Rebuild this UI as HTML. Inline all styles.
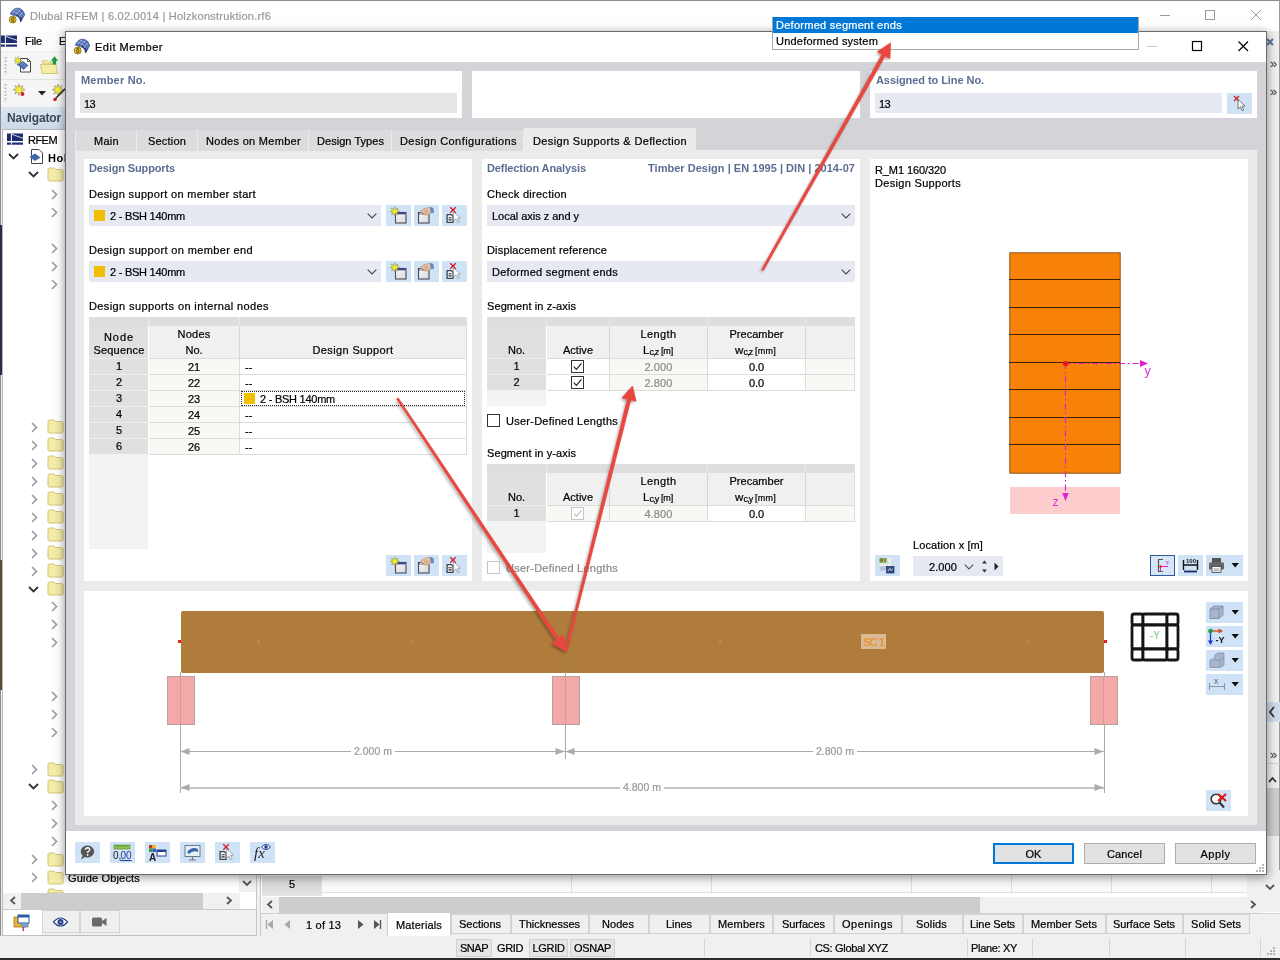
<!DOCTYPE html>
<html lang="en"><head><meta charset="utf-8"><title>Dlubal RFEM - Edit Member</title>
<style>
html,body{margin:0;padding:0;}
body{width:1280px;height:960px;overflow:hidden;position:relative;background:#fff;font-family:"Liberation Sans",sans-serif;font-size:12px;color:#000;}
.a{position:absolute;}
.t{opacity:0.999;-webkit-text-stroke:0.22px;position:absolute;height:16px;line-height:16px;white-space:nowrap;}
svg{overflow:visible;opacity:0.999;}
</style></head><body>
<div class="a" style="left:0px;top:0px;width:1280px;height:960px;background:#f0f0f0;"></div>
<div class="a" style="left:0px;top:0px;width:1280px;height:31px;background:#ffffff;"></div>
<div class="a" style="left:0px;top:0px;width:1280px;height:1px;background:#8d8d8d;"></div>
<svg class="a" style="left:9px;top:8px;" width="16" height="16" viewBox="0 0 16 16"><path d="M1.300 6 Q4.500 -0.300 9 0.200 Q14.300 0.800 15.600 6.800 L11.600 14 Q11 8.800 6.300 7.600 Q3.500 7 1.300 6 Z" fill="#4c6cb4" stroke="#2a3c74" stroke-width="0.700"/><path d="M11.600 14 Q11 8.800 6.300 7.600 L7.800 6.300 Q12.500 7.800 13 11.500 Z" fill="#2c3e78"/><path d="M3.400 3.200 Q8 3.600 13 9.400 M6 1 Q10.500 2 14.600 7.600 M3 6.600 Q5 1.800 9 0.400 M6.500 7.600 Q8.500 3 12 1.600 M9.800 9.500 Q11.500 5.500 14.300 4" fill="none" stroke="#b4c8ee" stroke-width="0.600"/><circle cx="3.700" cy="11.600" r="3.500" fill="#e6c437" stroke="#7a6410" stroke-width="0.800"/><text x="2" y="14" font-size="6.500" font-weight="bold" font-family="Liberation Sans, sans-serif" fill="#6a5208">6</text></svg>
<div class="t" style="left:30.00px;top:8px;font-size:11px;letter-spacing:0.251px;color:#999999;">Dlubal RFEM | 6.02.0014 | Holzkonstruktion.rf6</div>
<svg class="a" style="left:1159px;top:9px;" width="104" height="14" viewBox="0 0 104 14"><path d="M1 6.5 H11" stroke="#9a9a9a" stroke-width="1"/><rect x="46.500" y="1.500" width="9" height="9" fill="none" stroke="#9a9a9a"/><path d="M92 1 L102 11 M102 1 L92 11" stroke="#9a9a9a" stroke-width="1"/></svg>
<div class="a" style="left:0px;top:31px;width:1280px;height:21px;background:#fbfbfb;"></div>
<svg class="a" style="left:1px;top:35px;" width="16" height="12" viewBox="0 0 16 12"><rect x="0" y="0" width="16" height="12" fill="#fff"/><rect x="0" y="0.5" width="16" height="7.5" fill="#1d2c70"/><rect x="0" y="9.5" width="16" height="2.2" fill="#1d2c70"/><rect x="3.900" y="0.500" width="1" height="11.200" fill="#fff"/><path d="M4.500 1.200 L16 5.300" stroke="#fff" stroke-width="0.8"/></svg>
<div class="t" style="left:25.00px;top:33px;font-size:11px;letter-spacing:-0.181px;">File</div>
<div class="t" style="left:59.00px;top:33px;font-size:11px;letter-spacing:0.511px;">Edit</div>
<div class="a" style="left:0px;top:52px;width:1280px;height:54px;background:#f5f5f5;"></div>
<div class="a" style="left:0px;top:51px;width:1280px;height:1px;background:#ececec;"></div>
<div class="a" style="left:0px;top:79px;width:1280px;height:1px;background:#e2e2e2;"></div>
<svg class="a" style="left:4px;top:57px;" width="3" height="18" viewBox="0 0 3 18"><path d="M1.5 0 V18" stroke="#b8b8b8" stroke-width="2" stroke-dasharray="1.5 2"/></svg>
<svg class="a" style="left:4px;top:84px;" width="3" height="18" viewBox="0 0 3 18"><path d="M1.5 0 V18" stroke="#b8b8b8" stroke-width="2" stroke-dasharray="1.5 2"/></svg>
<svg class="a" style="left:14px;top:56px;" width="18" height="18" viewBox="0 0 18 18"><path d="M6.500 2.500 H13.500 L16.500 5.500 V16 H6.500 Z" fill="#fff" stroke="#444" stroke-width="1"/><path d="M13.500 2.500 V5.500 H16.500" fill="none" stroke="#444" stroke-width="0.800"/><path d="M2.500 8.500 L9 5 L14.500 9.500 L9.500 14 L7 11.500 Z" fill="#4a6cac"/><path d="M5.500 7 L11.500 11.500 M8 6 L12.500 10.500" stroke="#9ab4dc" stroke-width="0.600"/><path d="M4 0.500 L4.700 2.700 L6.800 1.600 L5.900 3.700 L8 4.500 L5.900 5.300 L6.800 7.400 L4.700 6.300 L4 8.500 L3.300 6.300 L1.200 7.400 L2.100 5.300 L0 4.500 L2.100 3.700 L1.200 1.600 L3.300 2.700 Z" fill="#f4ee2a" stroke="#8a8a6a" stroke-width="0.500"/></svg>
<svg class="a" style="left:40px;top:56px;" width="20" height="18" viewBox="0 0 20 18"><path d="M2 6 Q2 4.500 3.500 4.500 H7 L8.500 6 H14 V8 H3 Z" fill="#efe6a0" stroke="#cfc578" stroke-width="0.800"/><path d="M0.500 8.500 H16 L17.500 17.500 H2 Z" fill="#f3eba6" stroke="#cfc578" stroke-width="0.900"/><path d="M14.500 0.300 L18.200 4.800 H16.200 V8.500 H12.800 V4.800 H10.800 Z" fill="#1e9a48"/></svg>
<svg class="a" style="left:13px;top:84px;" width="14" height="16" viewBox="0 0 14 16"><path d="M6 0 L7 3.2 L10 1.6 L8.6 4.6 L12 5.6 L8.7 6.8 L10.2 10 L7 8.3 L6 11.6 L5 8.3 L1.8 10 L3.3 6.8 L0 5.6 L3.4 4.6 L2 1.6 L5 3.2 Z" fill="#f6ee3a" stroke="#8a8a6a" stroke-width="0.6"/><circle cx="9.5" cy="10" r="1.9" fill="#d81c2c"/></svg>
<svg class="a" style="left:38px;top:91px;" width="8" height="5" viewBox="0 0 8 5"><path d="M0 0 H8 L4 4.500 Z" fill="#222"/></svg>
<svg class="a" style="left:52px;top:84px;" width="16" height="18" viewBox="0 0 16 18"><path d="M6 0 L7 3.2 L10 1.6 L8.6 4.6 L12 5.6 L8.7 6.8 L10.2 10 L7 8.3 L6 11.6 L5 8.3 L1.8 10 L3.3 6.8 L0 5.6 L3.4 4.6 L2 1.6 L5 3.2 Z" fill="#f6ee3a" stroke="#8a8a6a" stroke-width="0.6"/><path d="M3 15 L14 4" stroke="#111" stroke-width="1.2"/><circle cx="3" cy="15.5" r="1.8" fill="#d81c2c"/></svg>
<div class="a" style="left:0px;top:107px;width:258px;height:22px;background:linear-gradient(#dde6f1,#cbd9e9);"></div>
<div class="t" style="left:7.00px;top:110px;font-size:12px;letter-spacing:-0.150px;color:#3d4654;font-weight:bold;-webkit-text-stroke:0;">Navigator</div>
<div class="a" style="left:2px;top:129px;width:255px;height:782px;background:#ffffff;border:1px solid #b9b9b9;box-sizing:border-box;"></div>
<svg class="a" style="left:7px;top:133px;" width="16" height="12" viewBox="0 0 16 12"><rect x="0" y="0" width="16" height="12" fill="#fff"/><rect x="0" y="0.5" width="16" height="7.5" fill="#1d2c70"/><rect x="0" y="9.5" width="16" height="2.2" fill="#1d2c70"/><rect x="3.900" y="0.500" width="1" height="11.200" fill="#fff"/><path d="M4.500 1.200 L16 5.300" stroke="#fff" stroke-width="0.8"/></svg>
<div class="t" style="left:28.00px;top:132px;font-size:11px;letter-spacing:-0.541px;">RFEM</div>
<svg class="a" style="left:8px;top:153px;" width="11" height="7" viewBox="0 0 11 7"><path d="M1 1 L5.5 5.5 L10 1" fill="none" stroke="#333" stroke-width="1.8"/></svg>
<svg class="a" style="left:29px;top:148px;" width="16" height="17" viewBox="0 0 16 17"><path d="M2.5 1.5 H10 L13.5 5 V15.5 H2.5 Z" fill="#fff" stroke="#444" stroke-width="1"/><path d="M0.5 9 L6 5.5 L11.5 9.5 L6 13 Z" fill="#3a68a8"/></svg>
<div class="t" style="left:48.00px;top:150px;font-size:11px;letter-spacing:0.573px;font-weight:bold;-webkit-text-stroke:0;">Holzkonstruktion</div>
<svg class="a" style="left:28px;top:171px;" width="11" height="7" viewBox="0 0 11 7"><path d="M1 1 L5.5 5.5 L10 1" fill="none" stroke="#333" stroke-width="1.8"/></svg>
<svg class="a" style="left:47px;top:167px;" width="17" height="15" viewBox="0 0 17 15"><path d="M1 2.5 Q1 1 2.5 1 L7 1 L8.5 2.5 L14.5 2.5 Q16 2.5 16 4 L16 12.5 Q16 14 14.5 14 L2.5 14 Q1 14 1 12.5 Z" fill="#f3eba6" stroke="#cfc578" stroke-width="1"/></svg>
<svg class="a" style="left:51px;top:189px;" width="7" height="11" viewBox="0 0 7 11"><path d="M1 1 L5.5 5.5 L1 10" fill="none" stroke="#9a9a9a" stroke-width="1.6"/></svg>
<svg class="a" style="left:51px;top:207px;" width="7" height="11" viewBox="0 0 7 11"><path d="M1 1 L5.5 5.5 L1 10" fill="none" stroke="#9a9a9a" stroke-width="1.6"/></svg>
<svg class="a" style="left:51px;top:243px;" width="7" height="11" viewBox="0 0 7 11"><path d="M1 1 L5.5 5.5 L1 10" fill="none" stroke="#9a9a9a" stroke-width="1.6"/></svg>
<svg class="a" style="left:51px;top:261px;" width="7" height="11" viewBox="0 0 7 11"><path d="M1 1 L5.5 5.5 L1 10" fill="none" stroke="#9a9a9a" stroke-width="1.6"/></svg>
<svg class="a" style="left:51px;top:279px;" width="7" height="11" viewBox="0 0 7 11"><path d="M1 1 L5.5 5.5 L1 10" fill="none" stroke="#9a9a9a" stroke-width="1.6"/></svg>
<svg class="a" style="left:31px;top:422px;" width="7" height="11" viewBox="0 0 7 11"><path d="M1 1 L5.5 5.5 L1 10" fill="none" stroke="#9a9a9a" stroke-width="1.6"/></svg>
<svg class="a" style="left:47px;top:419px;" width="17" height="15" viewBox="0 0 17 15"><path d="M1 2.5 Q1 1 2.5 1 L7 1 L8.5 2.5 L14.5 2.5 Q16 2.5 16 4 L16 12.5 Q16 14 14.5 14 L2.5 14 Q1 14 1 12.5 Z" fill="#f3eba6" stroke="#cfc578" stroke-width="1"/></svg>
<svg class="a" style="left:31px;top:440px;" width="7" height="11" viewBox="0 0 7 11"><path d="M1 1 L5.5 5.5 L1 10" fill="none" stroke="#9a9a9a" stroke-width="1.6"/></svg>
<svg class="a" style="left:47px;top:437px;" width="17" height="15" viewBox="0 0 17 15"><path d="M1 2.5 Q1 1 2.5 1 L7 1 L8.5 2.5 L14.5 2.5 Q16 2.5 16 4 L16 12.5 Q16 14 14.5 14 L2.5 14 Q1 14 1 12.5 Z" fill="#f3eba6" stroke="#cfc578" stroke-width="1"/></svg>
<svg class="a" style="left:31px;top:458px;" width="7" height="11" viewBox="0 0 7 11"><path d="M1 1 L5.5 5.5 L1 10" fill="none" stroke="#9a9a9a" stroke-width="1.6"/></svg>
<svg class="a" style="left:47px;top:455px;" width="17" height="15" viewBox="0 0 17 15"><path d="M1 2.5 Q1 1 2.5 1 L7 1 L8.5 2.5 L14.5 2.5 Q16 2.5 16 4 L16 12.5 Q16 14 14.5 14 L2.5 14 Q1 14 1 12.5 Z" fill="#f3eba6" stroke="#cfc578" stroke-width="1"/></svg>
<svg class="a" style="left:31px;top:476px;" width="7" height="11" viewBox="0 0 7 11"><path d="M1 1 L5.5 5.5 L1 10" fill="none" stroke="#9a9a9a" stroke-width="1.6"/></svg>
<svg class="a" style="left:47px;top:473px;" width="17" height="15" viewBox="0 0 17 15"><path d="M1 2.5 Q1 1 2.5 1 L7 1 L8.5 2.5 L14.5 2.5 Q16 2.5 16 4 L16 12.5 Q16 14 14.5 14 L2.5 14 Q1 14 1 12.5 Z" fill="#f3eba6" stroke="#cfc578" stroke-width="1"/></svg>
<svg class="a" style="left:31px;top:494px;" width="7" height="11" viewBox="0 0 7 11"><path d="M1 1 L5.5 5.5 L1 10" fill="none" stroke="#9a9a9a" stroke-width="1.6"/></svg>
<svg class="a" style="left:47px;top:491px;" width="17" height="15" viewBox="0 0 17 15"><path d="M1 2.5 Q1 1 2.5 1 L7 1 L8.5 2.5 L14.5 2.5 Q16 2.5 16 4 L16 12.5 Q16 14 14.5 14 L2.5 14 Q1 14 1 12.5 Z" fill="#f3eba6" stroke="#cfc578" stroke-width="1"/></svg>
<svg class="a" style="left:31px;top:512px;" width="7" height="11" viewBox="0 0 7 11"><path d="M1 1 L5.5 5.5 L1 10" fill="none" stroke="#9a9a9a" stroke-width="1.6"/></svg>
<svg class="a" style="left:47px;top:509px;" width="17" height="15" viewBox="0 0 17 15"><path d="M1 2.5 Q1 1 2.5 1 L7 1 L8.5 2.5 L14.5 2.5 Q16 2.5 16 4 L16 12.5 Q16 14 14.5 14 L2.5 14 Q1 14 1 12.5 Z" fill="#f3eba6" stroke="#cfc578" stroke-width="1"/></svg>
<svg class="a" style="left:31px;top:530px;" width="7" height="11" viewBox="0 0 7 11"><path d="M1 1 L5.5 5.5 L1 10" fill="none" stroke="#9a9a9a" stroke-width="1.6"/></svg>
<svg class="a" style="left:47px;top:527px;" width="17" height="15" viewBox="0 0 17 15"><path d="M1 2.5 Q1 1 2.5 1 L7 1 L8.5 2.5 L14.5 2.5 Q16 2.5 16 4 L16 12.5 Q16 14 14.5 14 L2.5 14 Q1 14 1 12.5 Z" fill="#f3eba6" stroke="#cfc578" stroke-width="1"/></svg>
<svg class="a" style="left:31px;top:548px;" width="7" height="11" viewBox="0 0 7 11"><path d="M1 1 L5.5 5.5 L1 10" fill="none" stroke="#9a9a9a" stroke-width="1.6"/></svg>
<svg class="a" style="left:47px;top:545px;" width="17" height="15" viewBox="0 0 17 15"><path d="M1 2.5 Q1 1 2.5 1 L7 1 L8.5 2.5 L14.5 2.5 Q16 2.5 16 4 L16 12.5 Q16 14 14.5 14 L2.5 14 Q1 14 1 12.5 Z" fill="#f3eba6" stroke="#cfc578" stroke-width="1"/></svg>
<svg class="a" style="left:31px;top:566px;" width="7" height="11" viewBox="0 0 7 11"><path d="M1 1 L5.5 5.5 L1 10" fill="none" stroke="#9a9a9a" stroke-width="1.6"/></svg>
<svg class="a" style="left:47px;top:563px;" width="17" height="15" viewBox="0 0 17 15"><path d="M1 2.5 Q1 1 2.5 1 L7 1 L8.5 2.5 L14.5 2.5 Q16 2.5 16 4 L16 12.5 Q16 14 14.5 14 L2.5 14 Q1 14 1 12.5 Z" fill="#f3eba6" stroke="#cfc578" stroke-width="1"/></svg>
<svg class="a" style="left:28px;top:586px;" width="11" height="7" viewBox="0 0 11 7"><path d="M1 1 L5.5 5.5 L10 1" fill="none" stroke="#333" stroke-width="1.8"/></svg>
<svg class="a" style="left:47px;top:581px;" width="17" height="15" viewBox="0 0 17 15"><path d="M1 2.5 Q1 1 2.5 1 L7 1 L8.5 2.5 L14.5 2.5 Q16 2.5 16 4 L16 12.5 Q16 14 14.5 14 L2.5 14 Q1 14 1 12.5 Z" fill="#f3eba6" stroke="#cfc578" stroke-width="1"/></svg>
<svg class="a" style="left:51px;top:601px;" width="7" height="11" viewBox="0 0 7 11"><path d="M1 1 L5.5 5.5 L1 10" fill="none" stroke="#9a9a9a" stroke-width="1.6"/></svg>
<svg class="a" style="left:51px;top:619px;" width="7" height="11" viewBox="0 0 7 11"><path d="M1 1 L5.5 5.5 L1 10" fill="none" stroke="#9a9a9a" stroke-width="1.6"/></svg>
<svg class="a" style="left:51px;top:637px;" width="7" height="11" viewBox="0 0 7 11"><path d="M1 1 L5.5 5.5 L1 10" fill="none" stroke="#9a9a9a" stroke-width="1.6"/></svg>
<svg class="a" style="left:51px;top:691px;" width="7" height="11" viewBox="0 0 7 11"><path d="M1 1 L5.5 5.5 L1 10" fill="none" stroke="#9a9a9a" stroke-width="1.6"/></svg>
<svg class="a" style="left:51px;top:709px;" width="7" height="11" viewBox="0 0 7 11"><path d="M1 1 L5.5 5.5 L1 10" fill="none" stroke="#9a9a9a" stroke-width="1.6"/></svg>
<svg class="a" style="left:51px;top:727px;" width="7" height="11" viewBox="0 0 7 11"><path d="M1 1 L5.5 5.5 L1 10" fill="none" stroke="#9a9a9a" stroke-width="1.6"/></svg>
<svg class="a" style="left:31px;top:764px;" width="7" height="11" viewBox="0 0 7 11"><path d="M1 1 L5.5 5.5 L1 10" fill="none" stroke="#9a9a9a" stroke-width="1.6"/></svg>
<svg class="a" style="left:47px;top:762px;" width="17" height="15" viewBox="0 0 17 15"><path d="M1 2.5 Q1 1 2.5 1 L7 1 L8.5 2.5 L14.5 2.5 Q16 2.5 16 4 L16 12.5 Q16 14 14.5 14 L2.5 14 Q1 14 1 12.5 Z" fill="#f3eba6" stroke="#cfc578" stroke-width="1"/></svg>
<svg class="a" style="left:28px;top:783px;" width="11" height="7" viewBox="0 0 11 7"><path d="M1 1 L5.5 5.5 L10 1" fill="none" stroke="#333" stroke-width="1.8"/></svg>
<svg class="a" style="left:47px;top:779px;" width="17" height="15" viewBox="0 0 17 15"><path d="M1 2.5 Q1 1 2.5 1 L7 1 L8.5 2.5 L14.5 2.5 Q16 2.5 16 4 L16 12.5 Q16 14 14.5 14 L2.5 14 Q1 14 1 12.5 Z" fill="#f3eba6" stroke="#cfc578" stroke-width="1"/></svg>
<svg class="a" style="left:51px;top:800px;" width="7" height="11" viewBox="0 0 7 11"><path d="M1 1 L5.5 5.5 L1 10" fill="none" stroke="#9a9a9a" stroke-width="1.6"/></svg>
<svg class="a" style="left:51px;top:818px;" width="7" height="11" viewBox="0 0 7 11"><path d="M1 1 L5.5 5.5 L1 10" fill="none" stroke="#9a9a9a" stroke-width="1.6"/></svg>
<svg class="a" style="left:51px;top:836px;" width="7" height="11" viewBox="0 0 7 11"><path d="M1 1 L5.5 5.5 L1 10" fill="none" stroke="#9a9a9a" stroke-width="1.6"/></svg>
<svg class="a" style="left:31px;top:854px;" width="7" height="11" viewBox="0 0 7 11"><path d="M1 1 L5.5 5.5 L1 10" fill="none" stroke="#9a9a9a" stroke-width="1.6"/></svg>
<svg class="a" style="left:47px;top:852px;" width="17" height="15" viewBox="0 0 17 15"><path d="M1 2.5 Q1 1 2.5 1 L7 1 L8.5 2.5 L14.5 2.5 Q16 2.5 16 4 L16 12.5 Q16 14 14.5 14 L2.5 14 Q1 14 1 12.5 Z" fill="#f3eba6" stroke="#cfc578" stroke-width="1"/></svg>
<svg class="a" style="left:31px;top:872px;" width="7" height="11" viewBox="0 0 7 11"><path d="M1 1 L5.5 5.5 L1 10" fill="none" stroke="#9a9a9a" stroke-width="1.6"/></svg>
<svg class="a" style="left:47px;top:870px;" width="17" height="15" viewBox="0 0 17 15"><path d="M1 2.5 Q1 1 2.5 1 L7 1 L8.5 2.5 L14.5 2.5 Q16 2.5 16 4 L16 12.5 Q16 14 14.5 14 L2.5 14 Q1 14 1 12.5 Z" fill="#f3eba6" stroke="#cfc578" stroke-width="1"/></svg>
<div class="t" style="left:68.00px;top:870px;font-size:11px;letter-spacing:0.177px;">Guide Objects</div>
<svg class="a" style="left:47px;top:888px;" width="17" height="5" viewBox="0 0 17 5"><path d="M1 5 V2.500 Q1 1 2.500 1 L7 1 L8.500 2.500 L14.500 2.500 Q16 2.500 16 4 V5 Z" fill="#f3eba6" stroke="#cfc578" stroke-width="1"/></svg>
<div class="a" style="left:239px;top:875px;width:17px;height:17px;background:#f0f0f0;"></div>
<svg class="a" style="left:242px;top:880px;" width="10" height="7" viewBox="0 0 10 7"><path d="M1 1 L5 5 L9 1" fill="none" stroke="#555" stroke-width="1.8"/></svg>
<div class="a" style="left:3px;top:893px;width:237px;height:16px;background:#f0f0f0;"></div>
<div class="a" style="left:21px;top:893px;width:182px;height:16px;background:#cdcdcd;"></div>
<svg class="a" style="left:9px;top:896px;" width="7" height="9" viewBox="0 0 7 9"><path d="M6 1 L2 4.5 L6 8" fill="none" stroke="#555" stroke-width="1.8"/></svg>
<svg class="a" style="left:226px;top:896px;" width="7" height="9" viewBox="0 0 7 9"><path d="M1 1 L5 4.5 L1 8" fill="none" stroke="#555" stroke-width="1.8"/></svg>
<div class="a" style="left:240px;top:893px;width:16px;height:16px;background:#ffffff;"></div>
<div class="a" style="left:2px;top:909px;width:255px;height:26px;background:#f0f0f0;"></div>
<div class="a" style="left:2px;top:909px;width:255px;height:1px;background:#c8c8c8;"></div>
<div class="a" style="left:3px;top:910px;width:39px;height:25px;background:#ffffff;"></div>
<div class="a" style="left:42px;top:910px;width:38px;height:23px;background:#efefef;border:1px solid #d4d4d4;box-sizing:border-box;"></div>
<div class="a" style="left:80px;top:910px;width:40px;height:23px;background:#efefef;border:1px solid #d4d4d4;box-sizing:border-box;"></div>
<div class="a" style="left:2px;top:935px;width:255px;height:1px;background:#c0c0c0;"></div>
<div class="a" style="left:256px;top:129px;width:1px;height:807px;background:#c8c8c8;"></div>
<div class="a" style="left:2px;top:129px;width:1px;height:807px;background:#b9b9b9;"></div>
<svg class="a" style="left:13px;top:914px;" width="18" height="18" viewBox="0 0 18 18"><path d="M1 3 H7 L8.5 5 H15 V13 H1 Z" fill="#f0b030" stroke="#a87010" stroke-width="0.8"/><rect x="5" y="1" width="11" height="8" fill="#fff" stroke="#2a5caa"/><rect x="5" y="1" width="11" height="2.5" fill="#2a5caa"/><path d="M7 10 L12 8 L16 12 L11 14 Z" fill="#6aa0e0"/><path d="M10 13 L10.5 17" stroke="#d02020" stroke-width="1.2"/></svg>
<svg class="a" style="left:53px;top:917px;" width="15" height="10" viewBox="0 0 15 10"><path d="M0.5 5 Q7.5 -3 14.5 5 Q7.5 13 0.5 5 Z" fill="#fff" stroke="#27408b" stroke-width="1.2"/><circle cx="7.5" cy="5" r="3" fill="#27408b"/><circle cx="7.5" cy="5" r="1.1" fill="#9ab"/></svg>
<svg class="a" style="left:92px;top:917px;" width="15" height="10" viewBox="0 0 15 10"><rect x="0" y="0.5" width="10" height="9" rx="1.5" fill="#6a6a6a"/><path d="M10 4 L14.5 1 V9 L10 6 Z" fill="#6a6a6a"/></svg>
<div class="a" style="left:0px;top:0px;width:1px;height:960px;background:#8a8a8a;"></div>
<div class="a" style="left:0px;top:225px;width:2px;height:150px;background:#2a2a4a;"></div>
<div class="a" style="left:0px;top:560px;width:2px;height:130px;background:#5a4a3a;"></div>
<div class="a" style="left:1267px;top:31px;width:13px;height:880px;background:#f0f0f0;"></div>
<div class="a" style="left:1279px;top:0px;width:1px;height:960px;background:#9a9a9a;"></div>
<svg class="a" style="left:1266px;top:38px;" width="8" height="8" viewBox="0 0 8 8"><path d="M1 1 L7 7 M7 1 L1 7" stroke="#5a7aa0" stroke-width="2"/></svg>
<div class="t" style="left:1270.00px;top:56px;font-size:13px;color:#555;">»</div>
<div class="t" style="left:1270.00px;top:84px;font-size:13px;color:#555;">»</div>
<div class="a" style="left:1267px;top:702px;width:13px;height:20px;background:#cddbea;"></div>
<svg class="a" style="left:1268px;top:706px;" width="8" height="12" viewBox="0 0 8 12"><path d="M6 1 L2 6 L6 11" fill="none" stroke="#333" stroke-width="1.8"/></svg>
<div class="t" style="left:1270.00px;top:747px;font-size:13px;color:#555;">»</div>
<div class="a" style="left:1267px;top:763px;width:13px;height:1px;background:#d0d0d0;"></div>
<div class="a" style="left:1267px;top:788px;width:12px;height:48px;background:#cdcdcd;"></div>
<svg class="a" style="left:1268px;top:776px;" width="9" height="7" viewBox="0 0 9 7"><path d="M1 6 L4.5 2 L8 6" fill="none" stroke="#333" stroke-width="1.8"/></svg>
<div class="a" style="left:261px;top:870px;width:1019px;height:66px;background:#ffffff;"></div>
<div class="a" style="left:260px;top:870px;width:1px;height:66px;background:#c8c8c8;"></div>
<div class="a" style="left:262px;top:876px;width:985px;height:17px;background:#fafaf8;"></div>
<div class="a" style="left:262px;top:876px;width:60px;height:16px;background:#dcdcdc;"></div>
<div class="a" style="left:262px;top:893px;width:60px;height:3px;background:#e4e4e4;"></div>
<div class="t" style="left:288.94px;top:876px;font-size:11px;">5</div>
<div class="a" style="left:262px;top:892px;width:985px;height:1px;background:#e0e0e0;"></div>
<div class="a" style="left:571px;top:875px;width:1px;height:18px;background:#e0e0e0;"></div>
<div class="a" style="left:711px;top:875px;width:1px;height:18px;background:#e0e0e0;"></div>
<div class="a" style="left:911px;top:875px;width:1px;height:18px;background:#e0e0e0;"></div>
<div class="a" style="left:1011px;top:875px;width:1px;height:18px;background:#e0e0e0;"></div>
<div class="a" style="left:1111px;top:875px;width:1px;height:18px;background:#e0e0e0;"></div>
<div class="a" style="left:1211px;top:875px;width:1px;height:18px;background:#e0e0e0;"></div>
<div class="a" style="left:1247px;top:870px;width:33px;height:42px;background:#f0f0f0;"></div>
<svg class="a" style="left:1265px;top:884px;" width="10" height="7" viewBox="0 0 10 7"><path d="M1 1 L5 5 L9 1" fill="none" stroke="#555" stroke-width="1.8"/></svg>
<div class="a" style="left:262px;top:897px;width:1000px;height:16px;background:#f0f0f0;"></div>
<div class="a" style="left:279px;top:897px;width:701px;height:16px;background:#cdcdcd;"></div>
<svg class="a" style="left:266px;top:900px;" width="7" height="9" viewBox="0 0 7 9"><path d="M6 1 L2 4.5 L6 8" fill="none" stroke="#555" stroke-width="1.8"/></svg>
<svg class="a" style="left:1250px;top:900px;" width="7" height="9" viewBox="0 0 7 9"><path d="M1 1 L5 4.5 L1 8" fill="none" stroke="#555" stroke-width="1.8"/></svg>
<div class="a" style="left:261px;top:913px;width:1019px;height:23px;background:#f0f0f0;"></div>
<div class="a" style="left:261px;top:913px;width:1019px;height:1px;background:#d0d0d0;"></div>
<svg class="a" style="left:266px;top:920px;" width="7" height="9" viewBox="0 0 7 9"><path d="M0.5 0 V9" stroke="#a8a8a8" stroke-width="1.4"/><path d="M7 0 V9 L1.5 4.5 Z" fill="#a8a8a8"/></svg>
<svg class="a" style="left:284px;top:920px;" width="6" height="9" viewBox="0 0 6 9"><path d="M6 0 V9 L0.5 4.5 Z" fill="#a8a8a8"/></svg>
<div class="t" style="left:306.00px;top:917px;font-size:11px;letter-spacing:0.195px;">1 of 13</div>
<svg class="a" style="left:358px;top:920px;" width="6" height="9" viewBox="0 0 6 9"><path d="M0 0 V9 L5.5 4.5 Z" fill="#555"/></svg>
<svg class="a" style="left:374px;top:920px;" width="7" height="9" viewBox="0 0 7 9"><path d="M6.5 0 V9" stroke="#555" stroke-width="1.4"/><path d="M0 0 V9 L5.5 4.5 Z" fill="#555"/></svg>
<div class="a" style="left:387px;top:913px;width:64px;height:23px;background:#ffffff;"></div>
<div class="a" style="left:387px;top:913px;width:1px;height:23px;background:#d0d0d0;"></div>
<div class="a" style="left:450px;top:913px;width:1px;height:23px;background:#d0d0d0;"></div>
<div class="t" style="left:396.00px;top:917px;font-size:11px;letter-spacing:0.153px;">Materials</div>
<div class="a" style="left:451px;top:914px;width:60px;height:20px;background:#efefef;border:1px solid #d2d2d2;box-sizing:border-box;"></div>
<div class="t" style="left:459.00px;top:916px;font-size:11px;letter-spacing:-0.024px;">Sections</div>
<div class="a" style="left:511px;top:914px;width:78px;height:20px;background:#efefef;border:1px solid #d2d2d2;box-sizing:border-box;"></div>
<div class="t" style="left:519.00px;top:916px;font-size:11px;letter-spacing:-0.012px;">Thicknesses</div>
<div class="a" style="left:589px;top:914px;width:60px;height:20px;background:#efefef;border:1px solid #d2d2d2;box-sizing:border-box;"></div>
<div class="t" style="left:602.00px;top:916px;font-size:11px;letter-spacing:0.041px;">Nodes</div>
<div class="a" style="left:649px;top:914px;width:61px;height:20px;background:#efefef;border:1px solid #d2d2d2;box-sizing:border-box;"></div>
<div class="t" style="left:666.00px;top:916px;font-size:11px;letter-spacing:-0.059px;">Lines</div>
<div class="a" style="left:710px;top:914px;width:63px;height:20px;background:#efefef;border:1px solid #d2d2d2;box-sizing:border-box;"></div>
<div class="t" style="left:718.00px;top:916px;font-size:11px;letter-spacing:0.166px;">Members</div>
<div class="a" style="left:773px;top:914px;width:61px;height:20px;background:#efefef;border:1px solid #d2d2d2;box-sizing:border-box;"></div>
<div class="t" style="left:782.00px;top:916px;font-size:11px;letter-spacing:-0.051px;">Surfaces</div>
<div class="a" style="left:834px;top:914px;width:68px;height:20px;background:#efefef;border:1px solid #d2d2d2;box-sizing:border-box;"></div>
<div class="t" style="left:842.00px;top:916px;font-size:11px;letter-spacing:0.489px;">Openings</div>
<div class="a" style="left:902px;top:914px;width:61px;height:20px;background:#efefef;border:1px solid #d2d2d2;box-sizing:border-box;"></div>
<div class="t" style="left:916.00px;top:916px;font-size:11px;letter-spacing:0.173px;">Solids</div>
<div class="a" style="left:963px;top:914px;width:60px;height:20px;background:#efefef;border:1px solid #d2d2d2;box-sizing:border-box;"></div>
<div class="t" style="left:970.00px;top:916px;font-size:11px;letter-spacing:-0.096px;">Line Sets</div>
<div class="a" style="left:1023px;top:914px;width:83px;height:20px;background:#efefef;border:1px solid #d2d2d2;box-sizing:border-box;"></div>
<div class="t" style="left:1031.00px;top:916px;font-size:11px;letter-spacing:0.054px;">Member Sets</div>
<div class="a" style="left:1106px;top:914px;width:77px;height:20px;background:#efefef;border:1px solid #d2d2d2;box-sizing:border-box;"></div>
<div class="t" style="left:1113.00px;top:916px;font-size:11px;letter-spacing:-0.081px;">Surface Sets</div>
<div class="a" style="left:1183px;top:914px;width:67px;height:20px;background:#efefef;border:1px solid #d2d2d2;box-sizing:border-box;"></div>
<div class="t" style="left:1191.00px;top:916px;font-size:11px;letter-spacing:0.047px;">Solid Sets</div>
<div class="a" style="left:0px;top:936px;width:1280px;height:22px;background:#f0f0f0;"></div>
<div class="a" style="left:456px;top:939px;width:36px;height:18px;background:#e6e6e6;border:1px solid #d0d0d0;box-sizing:border-box;"></div>
<div class="t" style="left:460.00px;top:940px;font-size:11px;letter-spacing:-0.489px;">SNAP</div>
<div class="t" style="left:497.00px;top:940px;font-size:11px;letter-spacing:-0.375px;">GRID</div>
<div class="a" style="left:529px;top:939px;width:39px;height:18px;background:#e6e6e6;border:1px solid #d0d0d0;box-sizing:border-box;"></div>
<div class="t" style="left:532.50px;top:940px;font-size:11px;letter-spacing:-0.323px;">LGRID</div>
<div class="a" style="left:570px;top:939px;width:45px;height:18px;background:#e6e6e6;border:1px solid #d0d0d0;box-sizing:border-box;"></div>
<div class="t" style="left:574.00px;top:940px;font-size:11px;letter-spacing:-0.303px;">OSNAP</div>
<div class="a" style="left:704px;top:938px;width:1px;height:19px;background:#d4d4d4;"></div>
<div class="a" style="left:810px;top:938px;width:1px;height:19px;background:#d4d4d4;"></div>
<div class="a" style="left:967px;top:938px;width:1px;height:19px;background:#d4d4d4;"></div>
<div class="a" style="left:1032px;top:938px;width:1px;height:19px;background:#d4d4d4;"></div>
<div class="a" style="left:1109px;top:938px;width:1px;height:19px;background:#d4d4d4;"></div>
<div class="a" style="left:1185px;top:938px;width:1px;height:19px;background:#d4d4d4;"></div>
<div class="a" style="left:1260px;top:938px;width:1px;height:19px;background:#d4d4d4;"></div>
<div class="t" style="left:815.00px;top:940px;font-size:11px;letter-spacing:-0.331px;">CS: Global XYZ</div>
<div class="t" style="left:971.00px;top:940px;font-size:11px;letter-spacing:-0.324px;">Plane: XY</div>
<svg class="a" style="left:1266px;top:946px;" width="10" height="10" viewBox="0 0 10 10"><g fill="#b0b0b0"><rect x="7" y="1" width="2" height="2"/><rect x="4" y="4" width="2" height="2"/><rect x="7" y="4" width="2" height="2"/><rect x="1" y="7" width="2" height="2"/><rect x="4" y="7" width="2" height="2"/><rect x="7" y="7" width="2" height="2"/></g></svg>
<div class="a" style="left:0px;top:958px;width:1280px;height:2px;background:#262c30;"></div>
<div class="a" style="left:65px;top:31px;width:1202px;height:844px;box-shadow:0 2px 9px 1px rgba(0,0,0,0.38);"></div>
<div class="a" style="left:65px;top:31px;width:1202px;height:844px;background:#d4d4d8;border:1px solid #6a6a6a;box-sizing:border-box;"></div>
<div class="a" style="left:66px;top:32px;width:1200px;height:30px;background:#ffffff;"></div>
<svg class="a" style="left:74px;top:39px;" width="16" height="16" viewBox="0 0 16 16"><path d="M1.300 6 Q4.500 -0.300 9 0.200 Q14.300 0.800 15.600 6.800 L11.600 14 Q11 8.800 6.300 7.600 Q3.500 7 1.300 6 Z" fill="#4c6cb4" stroke="#2a3c74" stroke-width="0.700"/><path d="M11.600 14 Q11 8.800 6.300 7.600 L7.800 6.300 Q12.500 7.800 13 11.500 Z" fill="#2c3e78"/><path d="M3.400 3.200 Q8 3.600 13 9.400 M6 1 Q10.500 2 14.600 7.600 M3 6.600 Q5 1.800 9 0.400 M6.500 7.600 Q8.500 3 12 1.600 M9.800 9.500 Q11.500 5.500 14.300 4" fill="none" stroke="#b4c8ee" stroke-width="0.600"/><circle cx="3.700" cy="11.600" r="3.500" fill="#e6c437" stroke="#7a6410" stroke-width="0.800"/><text x="2" y="14" font-size="6.500" font-weight="bold" font-family="Liberation Sans, sans-serif" fill="#6a5208">6</text></svg>
<div class="t" style="left:95.00px;top:39px;font-size:11px;letter-spacing:0.514px;">Edit Member</div>
<svg class="a" style="left:1146px;top:40px;" width="104" height="13" viewBox="0 0 104 13"><path d="M1 6.5 H11" stroke="#c8c8c8" stroke-width="1"/><rect x="46.500" y="1.500" width="9" height="9" fill="none" stroke="#000" stroke-width="1.200"/><path d="M92.500 1.500 L102 11 M102 1.500 L92.500 11" stroke="#000" stroke-width="1.2"/></svg>
<div class="a" style="left:66px;top:831px;width:1200px;height:43px;background:#ffffff;"></div>
<div class="a" style="left:75px;top:71px;width:387px;height:47px;background:#ffffff;"></div>
<div class="a" style="left:472px;top:71px;width:388px;height:47px;background:#ffffff;"></div>
<div class="a" style="left:870px;top:71px;width:387px;height:47px;background:#ffffff;"></div>
<div class="t" style="left:81.00px;top:72px;font-size:11px;letter-spacing:0.205px;color:#5b6d92;font-weight:bold;-webkit-text-stroke:0;">Member No.</div>
<div class="a" style="left:80px;top:93px;width:377px;height:20px;background:#e5e5e5;"></div>
<div class="t" style="left:84.00px;top:96px;font-size:11px;letter-spacing:-0.617px;">13</div>
<div class="t" style="left:876.00px;top:72px;font-size:11px;letter-spacing:-0.069px;color:#5b6d92;font-weight:bold;-webkit-text-stroke:0;">Assigned to Line No.</div>
<div class="a" style="left:875px;top:93px;width:347px;height:20px;background:#e6e8f2;"></div>
<div class="t" style="left:879.00px;top:96px;font-size:11px;letter-spacing:-0.617px;">13</div>
<div class="a" style="left:1227px;top:93px;width:25px;height:21px;background:#cfe2f6;"></div>
<svg class="a" style="left:1233px;top:95px;" width="14" height="17" viewBox="0 0 14 17"><path d="M1 1 L6 6 M6 1 L1 6" stroke="#d01818" stroke-width="1.2"/><path d="M5 4.5 L5 14 L7.3 11.8 L9 15.6 L10.6 14.9 L8.9 11.2 L12 11 Z" fill="#fff" stroke="#555" stroke-width="0.8"/></svg>
<div class="a" style="left:75px;top:150px;width:1182px;height:675px;background:#ebebeb;"></div>
<div class="a" style="left:75px;top:130px;width:449px;height:21px;background:#dcdcde;"></div>
<div class="a" style="left:136px;top:130px;width:1px;height:21px;background:#ececec;"></div>
<div class="t" style="left:94.00px;top:133px;font-size:11px;letter-spacing:0.290px;">Main</div>
<div class="a" style="left:197px;top:130px;width:1px;height:21px;background:#ececec;"></div>
<div class="t" style="left:148.00px;top:133px;font-size:11px;letter-spacing:0.187px;">Section</div>
<div class="a" style="left:308px;top:130px;width:1px;height:21px;background:#ececec;"></div>
<div class="t" style="left:206.00px;top:133px;font-size:11px;letter-spacing:0.301px;">Nodes on Member</div>
<div class="a" style="left:391px;top:130px;width:1px;height:21px;background:#ececec;"></div>
<div class="t" style="left:317.00px;top:133px;font-size:11px;letter-spacing:0.046px;">Design Types</div>
<div class="a" style="left:523px;top:130px;width:1px;height:21px;background:#ececec;"></div>
<div class="t" style="left:400.00px;top:133px;font-size:11px;letter-spacing:0.418px;">Design Configurations</div>
<div class="a" style="left:75px;top:130px;width:1px;height:21px;background:#ececec;"></div>
<div class="a" style="left:524px;top:128px;width:172px;height:23px;background:#ebebeb;"></div>
<div class="t" style="left:533.00px;top:133px;font-size:11px;letter-spacing:0.368px;">Design Supports &amp; Deflection</div>
<div class="a" style="left:84px;top:159px;width:388px;height:422px;background:#ffffff;"></div>
<div class="a" style="left:482px;top:159px;width:378px;height:422px;background:#ffffff;"></div>
<div class="a" style="left:870px;top:159px;width:378px;height:422px;background:#ffffff;"></div>
<div class="a" style="left:84px;top:591px;width:1164px;height:225px;background:#ffffff;"></div>
<div class="a" style="left:75px;top:842px;width:25px;height:21px;background:#cfe2f6;"></div>
<div class="a" style="left:110px;top:842px;width:25px;height:21px;background:#cfe2f6;"></div>
<div class="a" style="left:145px;top:842px;width:25px;height:21px;background:#cfe2f6;"></div>
<div class="a" style="left:180px;top:842px;width:25px;height:21px;background:#cfe2f6;"></div>
<div class="a" style="left:215px;top:842px;width:25px;height:21px;background:#cfe2f6;"></div>
<div class="a" style="left:250px;top:842px;width:25px;height:21px;background:#cfe2f6;"></div>
<svg class="a" style="left:79px;top:844px;" width="17" height="17" viewBox="0 0 17 17"><path d="M8.5 1.5 A6.5 6 0 1 1 6 13 L2 15.5 L3.6 11.6 A6.5 6 0 0 1 8.5 1.5 Z" fill="#555"/><path d="M6.4 5.8 Q6.6 3.8 8.7 3.8 Q10.8 3.9 10.7 5.7 Q10.6 6.8 9.3 7.5 Q8.6 7.9 8.6 9" fill="none" stroke="#fff" stroke-width="1.4"/><circle cx="8.6" cy="10.9" r="0.9" fill="#fff"/></svg>
<svg class="a" style="left:113px;top:845px;" width="19" height="16" viewBox="0 0 19 16"><rect x="1" y="0" width="16" height="4" fill="#8bc34a" stroke="#5a8a2a" stroke-width="0.6"/><path d="M4 0 V2 M7 0 V2 M10 0 V2 M13 0 V2" stroke="#3a6a1a" stroke-width="0.6"/><text x="0" y="14" font-size="10" font-family="Liberation Sans, sans-serif" fill="#222">0,</text><text x="7.5" y="14" font-size="10" font-family="Liberation Sans, sans-serif" fill="#223c9a" text-decoration="underline">00</text><path d="M7.5 15.5 H18" stroke="#223c9a" stroke-width="0.8"/></svg>
<svg class="a" style="left:148px;top:844px;" width="20" height="18" viewBox="0 0 20 18"><rect x="1" y="1" width="3.5" height="3.5" fill="#d03030"/><rect x="4.5" y="1" width="3.5" height="3.5" fill="#f0c020"/><rect x="1" y="4.5" width="3.5" height="3.5" fill="#30a040"/><rect x="4.5" y="4.5" width="3.5" height="3.5" fill="#3060c0"/><rect x="9" y="6" width="9" height="6" fill="#fff" stroke="#27408b" stroke-width="1"/><rect x="9" y="6" width="9" height="2" fill="#27408b"/><text x="1" y="17" font-size="10" font-weight="bold" font-family="Liberation Sans, sans-serif" fill="#222">A</text></svg>
<svg class="a" style="left:183px;top:844px;" width="20" height="18" viewBox="0 0 20 18"><rect x="2" y="1.5" width="15" height="11" fill="#e8eef6" stroke="#6a7a8a" stroke-width="1"/><path d="M4 8 Q9 2 15 5 L15 8 Q10 6 6 10 Z" fill="#3a68a8"/><path d="M9.5 12.5 V15.5 M6 16 H13" stroke="#6a7a8a" stroke-width="1.2"/></svg>
<svg class="a" style="left:219px;top:844px;" width="18" height="18" viewBox="0 0 18 18"><path d="M4.300 0.300 L9.700 5.700 M9.700 0.300 L4.300 5.700" stroke="#d81828" stroke-width="1.300"/><path d="M1.100 7.600 H5.300 L7.100 9.400 V15.300 H1.100 Z" fill="#fff" stroke="#3a3e48" stroke-width="1.300" stroke-linejoin="round"/><path d="M2.500 10.700 H5.700 M2.500 12.900 H5.700" stroke="#22252c" stroke-width="1.100"/><path d="M7.600 4.800 L7.600 14 L9.800 12 L11.600 15.600 L13.200 14.800 L11.500 11.300 L14.600 11 Z" fill="#fff" stroke="#8a90a0" stroke-width="0.800" stroke-linejoin="round"/></svg>
<svg class="a" style="left:253px;top:843px;" width="20" height="19" viewBox="0 0 20 19"><text x="1" y="15" font-size="15" font-style="italic" font-family="Liberation Serif, serif" fill="#222">fx</text><path d="M8.5 4 Q13 -1 17.5 4 Q13 9 8.5 4 Z" fill="#fff" stroke="#27408b" stroke-width="1"/><circle cx="13" cy="4" r="1.8" fill="#27408b"/></svg>
<div class="a" style="left:993px;top:843px;width:81px;height:21px;background:#e1e1e1;border:2px solid #0078d7;box-sizing:border-box;"></div>
<div class="a" style="left:1084px;top:843px;width:81px;height:21px;background:#e1e1e1;border:1px solid #adadad;box-sizing:border-box;"></div>
<div class="a" style="left:1175px;top:843px;width:81px;height:21px;background:#e1e1e1;border:1px solid #adadad;box-sizing:border-box;"></div>
<div class="t" style="left:1025.50px;top:846px;font-size:11px;letter-spacing:0.053px;">OK</div>
<div class="t" style="left:1107.00px;top:846px;font-size:11px;letter-spacing:0.127px;">Cancel</div>
<div class="t" style="left:1200.50px;top:846px;font-size:11px;letter-spacing:0.497px;">Apply</div>
<svg class="a" style="left:1255px;top:863px;" width="10" height="10" viewBox="0 0 10 10"><g fill="#b8b8b8"><rect x="7" y="1" width="2" height="2"/><rect x="4" y="4" width="2" height="2"/><rect x="7" y="4" width="2" height="2"/><rect x="1" y="7" width="2" height="2"/><rect x="4" y="7" width="2" height="2"/><rect x="7" y="7" width="2" height="2"/></g></svg>
<div class="t" style="left:89.00px;top:160px;font-size:11px;letter-spacing:-0.133px;color:#5b6d92;font-weight:bold;-webkit-text-stroke:0;">Design Supports</div>
<div class="t" style="left:89.00px;top:186px;font-size:11px;letter-spacing:0.329px;">Design support on member start</div>
<div class="t" style="left:89.00px;top:242px;font-size:11px;letter-spacing:0.354px;">Design support on member end</div>
<div class="a" style="left:89px;top:205px;width:292px;height:21px;background:#e6e8f2;"></div>
<div class="a" style="left:94px;top:210px;width:11px;height:11px;background:#f0c000;"></div>
<div class="t" style="left:110.00px;top:208px;font-size:11px;letter-spacing:-0.250px;">2 - BSH 140mm</div>
<svg class="a" style="left:367px;top:213px;" width="10" height="6" viewBox="0 0 10 6"><path d="M0.7 0.7 L5 5 L9.3 0.7" fill="none" stroke="#444" stroke-width="1.1"/></svg>
<div class="a" style="left:386px;top:205px;width:25px;height:21px;background:#cfe2f6;"></div>
<svg class="a" style="left:390px;top:207px;" width="18" height="17" viewBox="0 0 18 17"><defs><linearGradient id="wg" x1="0" y1="0" x2="1" y2="1"><stop offset="0" stop-color="#f6f6f8"/><stop offset="1" stop-color="#d8d8dc"/></linearGradient></defs><rect x="5.500" y="5.500" width="10.500" height="10.500" fill="url(#wg)" stroke="#464a58" stroke-width="1.100"/><rect x="6" y="5" width="9.500" height="2.300" fill="#3a4488"/><path d="M4.800 -0.300 L5.700 2.500 L8.200 1 L6.900 3.600 L9.600 4.400 L6.900 5.300 L8 7.900 L5.600 6.300 L4.800 9.100 L4 6.300 L1.600 7.900 L2.700 5.300 L0 4.400 L2.700 3.600 L1.400 1 L3.900 2.500 Z" fill="#f4f01e" stroke="#8a9060" stroke-width="0.600"/></svg>
<div class="a" style="left:414px;top:205px;width:25px;height:21px;background:#cfe2f6;"></div>
<svg class="a" style="left:418px;top:207px;" width="18" height="17" viewBox="0 0 18 17"><rect x="0.500" y="5.500" width="10.500" height="10.500" fill="url(#wg)" stroke="#464a58" stroke-width="1.100"/><rect x="1" y="5.200" width="9.500" height="2.200" fill="#5a5a6a"/><rect x="1.800" y="5.800" width="2" height="1" fill="#fff"/><path d="M2.500 4.500 Q5 1.500 9 0.800 L12.500 0.300 L13 5.500 L10.500 7.800 L7 8 Q6 6 4.500 6.300 Z" fill="#e6bfa0" stroke="#b08868" stroke-width="0.600"/><path d="M6.500 3.500 L8 6.500 M8.500 3 L9.800 6" stroke="#b08868" stroke-width="0.600" fill="none"/><path d="M12 0 Q14.500 -0.300 15.500 1.500 L16 6 L13.200 6.200 Z" fill="#6088c8"/></svg>
<div class="a" style="left:442px;top:205px;width:25px;height:21px;background:#cfe2f6;"></div>
<svg class="a" style="left:446px;top:207px;" width="18" height="18" viewBox="0 0 18 18"><path d="M4.300 0.300 L9.700 5.700 M9.700 0.300 L4.300 5.700" stroke="#d81828" stroke-width="1.300"/><path d="M1.100 7.600 H5.300 L7.100 9.400 V15.300 H1.100 Z" fill="#fff" stroke="#3a3e48" stroke-width="1.300" stroke-linejoin="round"/><path d="M2.500 10.700 H5.700 M2.500 12.900 H5.700" stroke="#22252c" stroke-width="1.100"/><path d="M7.600 4.800 L7.600 14 L9.800 12 L11.600 15.600 L13.200 14.800 L11.500 11.300 L14.600 11 Z" fill="#fff" stroke="#8a90a0" stroke-width="0.800" stroke-linejoin="round"/></svg>
<div class="a" style="left:89px;top:261px;width:292px;height:21px;background:#e6e8f2;"></div>
<div class="a" style="left:94px;top:266px;width:11px;height:11px;background:#f0c000;"></div>
<div class="t" style="left:110.00px;top:264px;font-size:11px;letter-spacing:-0.250px;">2 - BSH 140mm</div>
<svg class="a" style="left:367px;top:269px;" width="10" height="6" viewBox="0 0 10 6"><path d="M0.7 0.7 L5 5 L9.3 0.7" fill="none" stroke="#444" stroke-width="1.1"/></svg>
<div class="a" style="left:386px;top:261px;width:25px;height:21px;background:#cfe2f6;"></div>
<svg class="a" style="left:390px;top:263px;" width="18" height="17" viewBox="0 0 18 17"><defs><linearGradient id="wg" x1="0" y1="0" x2="1" y2="1"><stop offset="0" stop-color="#f6f6f8"/><stop offset="1" stop-color="#d8d8dc"/></linearGradient></defs><rect x="5.500" y="5.500" width="10.500" height="10.500" fill="url(#wg)" stroke="#464a58" stroke-width="1.100"/><rect x="6" y="5" width="9.500" height="2.300" fill="#3a4488"/><path d="M4.800 -0.300 L5.700 2.500 L8.200 1 L6.900 3.600 L9.600 4.400 L6.900 5.300 L8 7.900 L5.600 6.300 L4.800 9.100 L4 6.300 L1.600 7.900 L2.700 5.300 L0 4.400 L2.700 3.600 L1.400 1 L3.900 2.500 Z" fill="#f4f01e" stroke="#8a9060" stroke-width="0.600"/></svg>
<div class="a" style="left:414px;top:261px;width:25px;height:21px;background:#cfe2f6;"></div>
<svg class="a" style="left:418px;top:263px;" width="18" height="17" viewBox="0 0 18 17"><rect x="0.500" y="5.500" width="10.500" height="10.500" fill="url(#wg)" stroke="#464a58" stroke-width="1.100"/><rect x="1" y="5.200" width="9.500" height="2.200" fill="#5a5a6a"/><rect x="1.800" y="5.800" width="2" height="1" fill="#fff"/><path d="M2.500 4.500 Q5 1.500 9 0.800 L12.500 0.300 L13 5.500 L10.500 7.800 L7 8 Q6 6 4.500 6.300 Z" fill="#e6bfa0" stroke="#b08868" stroke-width="0.600"/><path d="M6.500 3.500 L8 6.500 M8.500 3 L9.800 6" stroke="#b08868" stroke-width="0.600" fill="none"/><path d="M12 0 Q14.500 -0.300 15.500 1.500 L16 6 L13.200 6.200 Z" fill="#6088c8"/></svg>
<div class="a" style="left:442px;top:261px;width:25px;height:21px;background:#cfe2f6;"></div>
<svg class="a" style="left:446px;top:263px;" width="18" height="18" viewBox="0 0 18 18"><path d="M4.300 0.300 L9.700 5.700 M9.700 0.300 L4.300 5.700" stroke="#d81828" stroke-width="1.300"/><path d="M1.100 7.600 H5.300 L7.100 9.400 V15.300 H1.100 Z" fill="#fff" stroke="#3a3e48" stroke-width="1.300" stroke-linejoin="round"/><path d="M2.500 10.700 H5.700 M2.500 12.900 H5.700" stroke="#22252c" stroke-width="1.100"/><path d="M7.600 4.800 L7.600 14 L9.800 12 L11.600 15.600 L13.200 14.800 L11.500 11.300 L14.600 11 Z" fill="#fff" stroke="#8a90a0" stroke-width="0.800" stroke-linejoin="round"/></svg>
<div class="t" style="left:89.00px;top:298px;font-size:11px;letter-spacing:0.396px;">Design supports on internal nodes</div>
<div class="a" style="left:89px;top:317px;width:378px;height:9px;background:#dedede;"></div>
<div class="a" style="left:148px;top:317px;width:1px;height:9px;background:#eaeaea;"></div>
<div class="a" style="left:239px;top:317px;width:1px;height:9px;background:#eaeaea;"></div>
<div class="a" style="left:89px;top:326px;width:59px;height:32px;background:#e0e0e0;"></div>
<div class="a" style="left:149px;top:326px;width:318px;height:32px;background:#f0f0f0;"></div>
<div class="a" style="left:239px;top:326px;width:1px;height:32px;background:#d6d6d6;"></div>
<div class="a" style="left:466px;top:326px;width:1px;height:128px;background:#dcdcdc;"></div>
<div class="t" style="left:104.00px;top:329px;font-size:11px;letter-spacing:0.926px;">Node</div>
<div class="t" style="left:93.50px;top:342px;font-size:11px;letter-spacing:0.182px;">Sequence</div>
<div class="t" style="left:177.50px;top:326px;font-size:11px;letter-spacing:0.241px;">Nodes</div>
<div class="t" style="left:185.50px;top:342px;font-size:11px;letter-spacing:-0.039px;">No.</div>
<div class="t" style="left:312.50px;top:342px;font-size:11px;letter-spacing:0.370px;">Design Support</div>
<div class="a" style="left:89px;top:358px;width:59px;height:16px;background:#e0e0e0;"></div>
<div class="a" style="left:149px;top:358px;width:90px;height:16px;background:#f8f8f5;"></div>
<div class="a" style="left:240px;top:358px;width:226px;height:16px;background:#ffffff;"></div>
<div class="a" style="left:89px;top:358px;width:59px;height:1px;background:#ececec;"></div>
<div class="a" style="left:149px;top:358px;width:318px;height:1px;background:#dcdcdc;"></div>
<div class="a" style="left:239px;top:358px;width:1px;height:16px;background:#dcdcdc;"></div>
<div class="t" style="left:115.94px;top:358px;font-size:11px;">1</div>
<div class="t" style="left:187.88px;top:359px;font-size:11px;">21</div>
<div class="t" style="left:245.00px;top:359px;font-size:11px;">--</div>
<div class="a" style="left:89px;top:374px;width:59px;height:16px;background:#e0e0e0;"></div>
<div class="a" style="left:149px;top:374px;width:90px;height:16px;background:#f8f8f5;"></div>
<div class="a" style="left:240px;top:374px;width:226px;height:16px;background:#ffffff;"></div>
<div class="a" style="left:89px;top:374px;width:59px;height:1px;background:#ececec;"></div>
<div class="a" style="left:149px;top:374px;width:318px;height:1px;background:#dcdcdc;"></div>
<div class="a" style="left:239px;top:374px;width:1px;height:16px;background:#dcdcdc;"></div>
<div class="t" style="left:115.94px;top:374px;font-size:11px;">2</div>
<div class="t" style="left:187.88px;top:375px;font-size:11px;">22</div>
<div class="t" style="left:245.00px;top:375px;font-size:11px;">--</div>
<div class="a" style="left:89px;top:390px;width:59px;height:16px;background:#e0e0e0;"></div>
<div class="a" style="left:149px;top:390px;width:90px;height:16px;background:#f8f8f5;"></div>
<div class="a" style="left:240px;top:390px;width:226px;height:16px;background:#ffffff;"></div>
<div class="a" style="left:89px;top:390px;width:59px;height:1px;background:#ececec;"></div>
<div class="a" style="left:149px;top:390px;width:318px;height:1px;background:#dcdcdc;"></div>
<div class="a" style="left:239px;top:390px;width:1px;height:16px;background:#dcdcdc;"></div>
<div class="t" style="left:115.94px;top:390px;font-size:11px;">3</div>
<div class="t" style="left:187.88px;top:391px;font-size:11px;">23</div>
<div class="a" style="left:89px;top:406px;width:59px;height:16px;background:#e0e0e0;"></div>
<div class="a" style="left:149px;top:406px;width:90px;height:16px;background:#f8f8f5;"></div>
<div class="a" style="left:240px;top:406px;width:226px;height:16px;background:#ffffff;"></div>
<div class="a" style="left:89px;top:406px;width:59px;height:1px;background:#ececec;"></div>
<div class="a" style="left:149px;top:406px;width:318px;height:1px;background:#dcdcdc;"></div>
<div class="a" style="left:239px;top:406px;width:1px;height:16px;background:#dcdcdc;"></div>
<div class="t" style="left:115.94px;top:406px;font-size:11px;">4</div>
<div class="t" style="left:187.88px;top:407px;font-size:11px;">24</div>
<div class="t" style="left:245.00px;top:407px;font-size:11px;">--</div>
<div class="a" style="left:89px;top:422px;width:59px;height:16px;background:#e0e0e0;"></div>
<div class="a" style="left:149px;top:422px;width:90px;height:16px;background:#f8f8f5;"></div>
<div class="a" style="left:240px;top:422px;width:226px;height:16px;background:#ffffff;"></div>
<div class="a" style="left:89px;top:422px;width:59px;height:1px;background:#ececec;"></div>
<div class="a" style="left:149px;top:422px;width:318px;height:1px;background:#dcdcdc;"></div>
<div class="a" style="left:239px;top:422px;width:1px;height:16px;background:#dcdcdc;"></div>
<div class="t" style="left:115.94px;top:422px;font-size:11px;">5</div>
<div class="t" style="left:187.88px;top:423px;font-size:11px;">25</div>
<div class="t" style="left:245.00px;top:423px;font-size:11px;">--</div>
<div class="a" style="left:89px;top:438px;width:59px;height:16px;background:#e0e0e0;"></div>
<div class="a" style="left:149px;top:438px;width:90px;height:16px;background:#f8f8f5;"></div>
<div class="a" style="left:240px;top:438px;width:226px;height:16px;background:#ffffff;"></div>
<div class="a" style="left:89px;top:438px;width:59px;height:1px;background:#ececec;"></div>
<div class="a" style="left:149px;top:438px;width:318px;height:1px;background:#dcdcdc;"></div>
<div class="a" style="left:239px;top:438px;width:1px;height:16px;background:#dcdcdc;"></div>
<div class="t" style="left:115.94px;top:438px;font-size:11px;">6</div>
<div class="t" style="left:187.88px;top:439px;font-size:11px;">26</div>
<div class="t" style="left:245.00px;top:439px;font-size:11px;">--</div>
<div class="a" style="left:149px;top:454px;width:318px;height:1px;background:#dcdcdc;"></div>
<div class="a" style="left:89px;top:454px;width:59px;height:95px;background:#f3f3f3;"></div>
<div class="a" style="left:241px;top:391px;width:224px;height:15px;border:1px dotted #222;box-sizing:border-box;"></div>
<div class="a" style="left:244px;top:393px;width:11px;height:11px;background:#f0c000;"></div>
<div class="t" style="left:260.00px;top:391px;font-size:11px;letter-spacing:-0.250px;">2 - BSH 140mm</div>
<div class="a" style="left:386px;top:555px;width:25px;height:21px;background:#cfe2f6;"></div>
<svg class="a" style="left:390px;top:557px;" width="18" height="17" viewBox="0 0 18 17"><defs><linearGradient id="wg" x1="0" y1="0" x2="1" y2="1"><stop offset="0" stop-color="#f6f6f8"/><stop offset="1" stop-color="#d8d8dc"/></linearGradient></defs><rect x="5.500" y="5.500" width="10.500" height="10.500" fill="url(#wg)" stroke="#464a58" stroke-width="1.100"/><rect x="6" y="5" width="9.500" height="2.300" fill="#3a4488"/><path d="M4.800 -0.300 L5.700 2.500 L8.200 1 L6.900 3.600 L9.600 4.400 L6.900 5.300 L8 7.900 L5.600 6.300 L4.800 9.100 L4 6.300 L1.600 7.900 L2.700 5.300 L0 4.400 L2.700 3.600 L1.400 1 L3.900 2.500 Z" fill="#f4f01e" stroke="#8a9060" stroke-width="0.600"/></svg>
<div class="a" style="left:414px;top:555px;width:25px;height:21px;background:#cfe2f6;"></div>
<svg class="a" style="left:418px;top:557px;" width="18" height="17" viewBox="0 0 18 17"><rect x="0.500" y="5.500" width="10.500" height="10.500" fill="url(#wg)" stroke="#464a58" stroke-width="1.100"/><rect x="1" y="5.200" width="9.500" height="2.200" fill="#5a5a6a"/><rect x="1.800" y="5.800" width="2" height="1" fill="#fff"/><path d="M2.500 4.500 Q5 1.500 9 0.800 L12.500 0.300 L13 5.500 L10.500 7.800 L7 8 Q6 6 4.500 6.300 Z" fill="#e6bfa0" stroke="#b08868" stroke-width="0.600"/><path d="M6.500 3.500 L8 6.500 M8.500 3 L9.800 6" stroke="#b08868" stroke-width="0.600" fill="none"/><path d="M12 0 Q14.500 -0.300 15.500 1.500 L16 6 L13.200 6.200 Z" fill="#6088c8"/></svg>
<div class="a" style="left:442px;top:555px;width:25px;height:21px;background:#cfe2f6;"></div>
<svg class="a" style="left:446px;top:557px;" width="18" height="18" viewBox="0 0 18 18"><path d="M4.300 0.300 L9.700 5.700 M9.700 0.300 L4.300 5.700" stroke="#d81828" stroke-width="1.300"/><path d="M1.100 7.600 H5.300 L7.100 9.400 V15.300 H1.100 Z" fill="#fff" stroke="#3a3e48" stroke-width="1.300" stroke-linejoin="round"/><path d="M2.500 10.700 H5.700 M2.500 12.900 H5.700" stroke="#22252c" stroke-width="1.100"/><path d="M7.600 4.800 L7.600 14 L9.800 12 L11.600 15.600 L13.200 14.800 L11.500 11.300 L14.600 11 Z" fill="#fff" stroke="#8a90a0" stroke-width="0.800" stroke-linejoin="round"/></svg>
<div class="t" style="left:487.00px;top:160px;font-size:11px;letter-spacing:-0.109px;color:#5b6d92;font-weight:bold;-webkit-text-stroke:0;">Deflection Analysis</div>
<div class="t" style="left:648.00px;top:160px;font-size:11px;letter-spacing:0.028px;color:#5b6d92;font-weight:bold;-webkit-text-stroke:0;">Timber Design | EN 1995 | DIN | 2014-07</div>
<div class="t" style="left:487.00px;top:186px;font-size:11px;letter-spacing:0.279px;">Check direction</div>
<div class="a" style="left:487px;top:205px;width:368px;height:21px;background:#e6e8f2;"></div>
<div class="t" style="left:492.00px;top:208px;font-size:11px;letter-spacing:-0.024px;">Local axis z and y</div>
<svg class="a" style="left:841px;top:213px;" width="10" height="6" viewBox="0 0 10 6"><path d="M0.7 0.7 L5 5 L9.3 0.7" fill="none" stroke="#444" stroke-width="1.1"/></svg>
<div class="t" style="left:487.00px;top:242px;font-size:11px;letter-spacing:0.175px;">Displacement reference</div>
<div class="a" style="left:487px;top:261px;width:368px;height:21px;background:#e6e8f2;"></div>
<div class="t" style="left:492.00px;top:264px;font-size:11px;letter-spacing:0.265px;">Deformed segment ends</div>
<svg class="a" style="left:841px;top:269px;" width="10" height="6" viewBox="0 0 10 6"><path d="M0.7 0.7 L5 5 L9.3 0.7" fill="none" stroke="#444" stroke-width="1.1"/></svg>
<div class="t" style="left:487.00px;top:298px;font-size:11px;letter-spacing:0.093px;">Segment in z-axis</div>
<div class="a" style="left:487px;top:317px;width:368px;height:9px;background:#dedede;"></div>
<div class="a" style="left:546px;top:317px;width:1px;height:9px;background:#eaeaea;"></div>
<div class="a" style="left:609px;top:317px;width:1px;height:9px;background:#eaeaea;"></div>
<div class="a" style="left:707px;top:317px;width:1px;height:9px;background:#eaeaea;"></div>
<div class="a" style="left:805px;top:317px;width:1px;height:9px;background:#eaeaea;"></div>
<div class="a" style="left:487px;top:326px;width:59px;height:32px;background:#e0e0e0;"></div>
<div class="a" style="left:547px;top:326px;width:308px;height:32px;background:#f0f0f0;"></div>
<div class="a" style="left:609px;top:326px;width:1px;height:32px;background:#d6d6d6;"></div>
<div class="a" style="left:707px;top:326px;width:1px;height:32px;background:#d6d6d6;"></div>
<div class="a" style="left:805px;top:326px;width:1px;height:32px;background:#d6d6d6;"></div>
<div class="t" style="left:508.00px;top:342px;font-size:11px;letter-spacing:-0.039px;">No.</div>
<div class="t" style="left:563.00px;top:342px;font-size:11px;letter-spacing:0.008px;">Active</div>
<div class="t" style="left:640.50px;top:326px;font-size:11px;letter-spacing:0.393px;">Length</div>
<div class="t" style="left:729.50px;top:326px;font-size:11px;letter-spacing:0.023px;">Precamber</div>
<div class="t" style="left:643.00px;top:342px;font-size:11.5px;">L</div>
<div class="t" style="left:649.50px;top:344px;font-size:9px;letter-spacing:-0.833px;">c,z</div>
<div class="t" style="left:661.00px;top:343px;font-size:9px;letter-spacing:-0.166px;">[m]</div>
<div class="t" style="left:735.00px;top:342px;font-size:11.5px;">w</div>
<div class="t" style="left:743.50px;top:344px;font-size:9px;letter-spacing:-0.833px;">c,z</div>
<div class="t" style="left:755.00px;top:343px;font-size:9px;letter-spacing:0.252px;">[mm]</div>
<div class="a" style="left:487px;top:358px;width:59px;height:16px;background:#e0e0e0;"></div>
<div class="a" style="left:547px;top:358px;width:62px;height:16px;background:#ffffff;"></div>
<div class="a" style="left:610px;top:358px;width:97px;height:16px;background:#f8f8f5;"></div>
<div class="a" style="left:708px;top:358px;width:97px;height:16px;background:#ffffff;"></div>
<div class="a" style="left:806px;top:358px;width:49px;height:16px;background:#f8f8f5;"></div>
<div class="a" style="left:487px;top:358px;width:59px;height:1px;background:#ececec;"></div>
<div class="a" style="left:547px;top:358px;width:308px;height:1px;background:#dcdcdc;"></div>
<div class="a" style="left:609px;top:358px;width:1px;height:16px;background:#dcdcdc;"></div>
<div class="a" style="left:707px;top:358px;width:1px;height:16px;background:#dcdcdc;"></div>
<div class="a" style="left:805px;top:358px;width:1px;height:16px;background:#dcdcdc;"></div>
<div class="t" style="left:513.44px;top:358px;font-size:11px;">1</div>
<svg class="a" style="left:571px;top:360px;" width="13" height="13" viewBox="0 0 13 13"><rect x="0.5" y="0.5" width="12" height="12" fill="#fff" stroke="#333" stroke-width="1"/><path d="M2.8 6.6 L5.4 9.4 L10.4 3.4" fill="none" stroke="#222" stroke-width="1.2"/></svg>
<div class="t" style="left:644.50px;top:359px;font-size:11px;letter-spacing:0.095px;color:#8a8a8a;">2.000</div>
<div class="t" style="left:749.00px;top:359px;font-size:11px;letter-spacing:-0.097px;">0.0</div>
<div class="a" style="left:487px;top:374px;width:59px;height:16px;background:#e0e0e0;"></div>
<div class="a" style="left:547px;top:374px;width:62px;height:16px;background:#ffffff;"></div>
<div class="a" style="left:610px;top:374px;width:97px;height:16px;background:#f8f8f5;"></div>
<div class="a" style="left:708px;top:374px;width:97px;height:16px;background:#ffffff;"></div>
<div class="a" style="left:806px;top:374px;width:49px;height:16px;background:#f8f8f5;"></div>
<div class="a" style="left:487px;top:374px;width:59px;height:1px;background:#ececec;"></div>
<div class="a" style="left:547px;top:374px;width:308px;height:1px;background:#dcdcdc;"></div>
<div class="a" style="left:609px;top:374px;width:1px;height:16px;background:#dcdcdc;"></div>
<div class="a" style="left:707px;top:374px;width:1px;height:16px;background:#dcdcdc;"></div>
<div class="a" style="left:805px;top:374px;width:1px;height:16px;background:#dcdcdc;"></div>
<div class="t" style="left:513.44px;top:374px;font-size:11px;">2</div>
<svg class="a" style="left:571px;top:376px;" width="13" height="13" viewBox="0 0 13 13"><rect x="0.5" y="0.5" width="12" height="12" fill="#fff" stroke="#333" stroke-width="1"/><path d="M2.8 6.6 L5.4 9.4 L10.4 3.4" fill="none" stroke="#222" stroke-width="1.2"/></svg>
<div class="t" style="left:644.50px;top:375px;font-size:11px;letter-spacing:0.095px;color:#8a8a8a;">2.800</div>
<div class="t" style="left:749.00px;top:375px;font-size:11px;letter-spacing:-0.097px;">0.0</div>
<div class="a" style="left:547px;top:390px;width:308px;height:1px;background:#dcdcdc;"></div>
<div class="a" style="left:854px;top:326px;width:1px;height:64px;background:#dcdcdc;"></div>
<div class="a" style="left:487px;top:390px;width:59px;height:16px;background:#f3f3f3;"></div>
<svg class="a" style="left:487px;top:414px;" width="13" height="13" viewBox="0 0 13 13"><rect x="0.5" y="0.5" width="12" height="12" fill="#fff" stroke="#333" stroke-width="1"/></svg>
<div class="t" style="left:506.00px;top:413px;font-size:11px;letter-spacing:0.250px;">User-Defined Lengths</div>
<div class="t" style="left:487.00px;top:445px;font-size:11px;letter-spacing:0.093px;">Segment in y-axis</div>
<div class="a" style="left:487px;top:464px;width:368px;height:9px;background:#dedede;"></div>
<div class="a" style="left:546px;top:464px;width:1px;height:9px;background:#eaeaea;"></div>
<div class="a" style="left:609px;top:464px;width:1px;height:9px;background:#eaeaea;"></div>
<div class="a" style="left:707px;top:464px;width:1px;height:9px;background:#eaeaea;"></div>
<div class="a" style="left:805px;top:464px;width:1px;height:9px;background:#eaeaea;"></div>
<div class="a" style="left:487px;top:473px;width:59px;height:32px;background:#e0e0e0;"></div>
<div class="a" style="left:547px;top:473px;width:308px;height:32px;background:#f0f0f0;"></div>
<div class="a" style="left:609px;top:473px;width:1px;height:32px;background:#d6d6d6;"></div>
<div class="a" style="left:707px;top:473px;width:1px;height:32px;background:#d6d6d6;"></div>
<div class="a" style="left:805px;top:473px;width:1px;height:32px;background:#d6d6d6;"></div>
<div class="t" style="left:508.00px;top:489px;font-size:11px;letter-spacing:-0.039px;">No.</div>
<div class="t" style="left:563.00px;top:489px;font-size:11px;letter-spacing:0.008px;">Active</div>
<div class="t" style="left:640.50px;top:473px;font-size:11px;letter-spacing:0.393px;">Length</div>
<div class="t" style="left:729.50px;top:473px;font-size:11px;letter-spacing:0.023px;">Precamber</div>
<div class="t" style="left:643.00px;top:489px;font-size:11.5px;">L</div>
<div class="t" style="left:649.50px;top:491px;font-size:9px;letter-spacing:-0.833px;">c,y</div>
<div class="t" style="left:661.00px;top:490px;font-size:9px;letter-spacing:-0.166px;">[m]</div>
<div class="t" style="left:735.00px;top:489px;font-size:11.5px;">w</div>
<div class="t" style="left:743.50px;top:491px;font-size:9px;letter-spacing:-0.833px;">c,y</div>
<div class="t" style="left:755.00px;top:490px;font-size:9px;letter-spacing:0.252px;">[mm]</div>
<div class="a" style="left:487px;top:505px;width:59px;height:16px;background:#e0e0e0;"></div>
<div class="a" style="left:547px;top:505px;width:62px;height:16px;background:#f8f8f5;"></div>
<div class="a" style="left:610px;top:505px;width:97px;height:16px;background:#f8f8f5;"></div>
<div class="a" style="left:708px;top:505px;width:97px;height:16px;background:#ffffff;"></div>
<div class="a" style="left:806px;top:505px;width:49px;height:16px;background:#f8f8f5;"></div>
<div class="a" style="left:487px;top:505px;width:59px;height:1px;background:#ececec;"></div>
<div class="a" style="left:547px;top:505px;width:308px;height:1px;background:#dcdcdc;"></div>
<div class="a" style="left:609px;top:505px;width:1px;height:16px;background:#dcdcdc;"></div>
<div class="a" style="left:707px;top:505px;width:1px;height:16px;background:#dcdcdc;"></div>
<div class="a" style="left:805px;top:505px;width:1px;height:16px;background:#dcdcdc;"></div>
<div class="t" style="left:513.44px;top:505px;font-size:11px;">1</div>
<svg class="a" style="left:571px;top:507px;" width="13" height="13" viewBox="0 0 13 13"><rect x="0.5" y="0.5" width="12" height="12" fill="#fff" stroke="#c4c4c4" stroke-width="1"/><path d="M2.8 6.6 L5.4 9.4 L10.4 3.4" fill="none" stroke="#bdbdbd" stroke-width="1.2"/></svg>
<div class="t" style="left:644.50px;top:506px;font-size:11px;letter-spacing:0.095px;color:#8a8a8a;">4.800</div>
<div class="t" style="left:749.00px;top:506px;font-size:11px;letter-spacing:-0.097px;">0.0</div>
<div class="a" style="left:547px;top:521px;width:308px;height:1px;background:#dcdcdc;"></div>
<div class="a" style="left:854px;top:473px;width:1px;height:48px;background:#dcdcdc;"></div>
<div class="a" style="left:487px;top:521px;width:59px;height:32px;background:#f3f3f3;"></div>
<svg class="a" style="left:487px;top:561px;" width="13" height="13" viewBox="0 0 13 13"><rect x="0.5" y="0.5" width="12" height="12" fill="#fff" stroke="#c4c4c4" stroke-width="1"/></svg>
<div class="t" style="left:506.00px;top:560px;font-size:11px;letter-spacing:0.250px;color:#8c8c8c;">User-Defined Lengths</div>
<div class="t" style="left:875.00px;top:162px;font-size:11px;letter-spacing:-0.096px;">R_M1 160/320</div>
<div class="t" style="left:875.00px;top:175px;font-size:11px;letter-spacing:0.312px;">Design Supports</div>
<svg class="a" style="left:1009px;top:252px;" width="112" height="222" viewBox="0 0 112 222"><rect x="0.800" y="0.800" width="110.400" height="220.400" fill="#f88208" stroke="#7a4a14" stroke-width="0.900"/><path d="M0 27.5 H111" stroke="#2a1a08" stroke-width="0.900"/><path d="M0 55.5 H111" stroke="#2a1a08" stroke-width="0.900"/><path d="M0 82.5 H111" stroke="#2a1a08" stroke-width="0.900"/><path d="M0 110.5 H111" stroke="#2a1a08" stroke-width="0.900"/><path d="M0 137.5 H111" stroke="#2a1a08" stroke-width="0.900"/><path d="M0 165.5 H111" stroke="#2a1a08" stroke-width="0.900"/><path d="M0 192.5 H111" stroke="#2a1a08" stroke-width="0.900"/></svg>
<div class="a" style="left:1010px;top:487px;width:110px;height:27px;background:#fdcccc;"></div>
<svg class="a" style="left:1060px;top:358px;" width="95" height="150" viewBox="0 0 95 150"><path d="M5 5.500 H82" stroke="#e020d0" stroke-width="1.200" stroke-dasharray="6 3 1.500 3"/><path d="M88 5.500 L80 2 V9 Z" fill="#e020d0"/><path d="M5.500 5 V135" stroke="#e020d0" stroke-width="1.200" stroke-dasharray="6 3 1.500 3"/><path d="M5.500 143 L2.300 135 H8.700 Z" fill="#e020d0"/><circle cx="5.500" cy="5.500" r="2.600" fill="#e81818"/></svg>
<div class="t" style="left:1144.50px;top:363px;font-size:12.5px;color:#e030d8;-webkit-text-stroke:0;">y</div>
<div class="t" style="left:1052.50px;top:494px;font-size:12.5px;color:#e030d8;-webkit-text-stroke:0;">z</div>
<div class="t" style="left:913.00px;top:537px;font-size:11px;letter-spacing:0.109px;">Location x [m]</div>
<div class="a" style="left:913px;top:556px;width:90px;height:20px;background:#e6e8f2;"></div>
<div class="t" style="left:929.00px;top:559px;font-size:11px;letter-spacing:0.095px;">2.000</div>
<svg class="a" style="left:963.5px;top:564px;" width="10" height="6" viewBox="0 0 10 6"><path d="M0.7 0.7 L5 5 L9.3 0.7" fill="none" stroke="#555" stroke-width="1.1"/></svg>
<svg class="a" style="left:981px;top:560px;" width="7" height="13" viewBox="0 0 7 13"><path d="M3.500 0.500 L6 3.500 H1 Z M3.500 12.500 L6 9.500 H1 Z" fill="#333"/></svg>
<svg class="a" style="left:994px;top:562px;" width="5" height="9" viewBox="0 0 5 9"><path d="M0.500 0.500 V8.500 L4.500 4.500 Z" fill="#222"/></svg>
<div class="a" style="left:875px;top:555px;width:25px;height:21px;background:#cfe2f6;"></div>
<svg class="a" style="left:878px;top:557px;" width="19" height="18" viewBox="0 0 19 18"><rect x="1.500" y="1" width="11.500" height="12.500" fill="#eef0ee"/><rect x="1.500" y="1" width="7" height="5" fill="#62a83c"/><rect x="3" y="2" width="3.500" height="2.200" fill="#c84838"/><path d="M5.500 1 V13.500 M9.500 1 V13.500 M1.500 6 H13 M1.500 9.500 H13" stroke="#c8d4c0" stroke-width="0.700"/><rect x="1.500" y="9.500" width="8" height="4" fill="#b4c0dc"/><rect x="8.500" y="9.500" width="7.500" height="6.500" fill="#34508c" stroke="#1c2f60" stroke-width="0.700"/><path d="M10 14 L11.800 11.500 L13.200 13.300 L14.800 11.800" fill="none" stroke="#dfe6f4" stroke-width="0.900"/></svg>
<div class="a" style="left:1150px;top:555px;width:25px;height:21px;background:#d6e6f7;border:1px solid #2a5a9a;box-sizing:border-box;"></div>
<div class="a" style="left:1178px;top:555px;width:25px;height:21px;background:#cfe2f6;"></div>
<div class="a" style="left:1206px;top:555px;width:37px;height:21px;background:#cfe2f6;"></div>
<svg class="a" style="left:1154px;top:558px;" width="18" height="16" viewBox="0 0 18 16"><path d="M9 1.500 H4.500 V13.500 H9" fill="none" stroke="#555" stroke-width="1.200"/><path d="M6.500 8.500 H14 M6.500 8.500 V14" stroke="#e020d0" stroke-width="1"/><circle cx="6.500" cy="8.500" r="1.200" fill="#e81818"/><path d="M12 3 L14 5.500 M14.500 3 L12.800 6.500" stroke="#e020d0" stroke-width="0.700"/></svg>
<svg class="a" style="left:1181px;top:557px;" width="19" height="17" viewBox="0 0 19 17"><text x="5" y="5.500" font-size="6" font-weight="bold" font-family="Liberation Sans, sans-serif" fill="#222">100</text><path d="M2.500 3 V13 M16.500 3 V13 M2.500 8 H16.500" fill="none" stroke="#111" stroke-width="1.400"/><path d="M3 14.500 H16" stroke="#1a2a6a" stroke-width="1.800"/></svg>
<svg class="a" style="left:1208px;top:557px;" width="18" height="17" viewBox="0 0 18 17"><rect x="4" y="1" width="9" height="5" fill="#555"/><rect x="1" y="5.500" width="15" height="7" rx="1" fill="#666"/><rect x="4" y="9.500" width="9" height="6" fill="#fff" stroke="#444" stroke-width="0.800"/><path d="M5.500 12 H11.500 M5.500 13.800 H11.500" stroke="#666" stroke-width="0.700"/></svg>
<svg class="a" style="left:1231px;top:563px;" width="9" height="5" viewBox="0 0 9 5"><path d="M0.500 0 H8 L4.200 4.500 Z" fill="#111"/></svg>
<div class="a" style="left:181px;top:611px;width:923px;height:62px;background:#b07c3c;border-radius:2px;"></div>
<div class="a" style="left:257px;top:640px;width:3px;height:3px;background:#c8843a;"></div>
<div class="a" style="left:411px;top:640px;width:3px;height:3px;background:#c8843a;"></div>
<div class="a" style="left:719px;top:640px;width:3px;height:3px;background:#c8843a;"></div>
<div class="a" style="left:1027px;top:640px;width:3px;height:3px;background:#c8843a;"></div>
<div class="a" style="left:178px;top:640px;width:3px;height:3px;background:#e82020;"></div>
<div class="a" style="left:1104px;top:640px;width:3px;height:3px;background:#e82020;"></div>
<div class="a" style="left:861px;top:634px;width:25px;height:15px;background:#d9b996;"></div>
<div class="t" style="left:863.00px;top:634px;font-size:11px;letter-spacing:-0.864px;color:#ec8e24;">SC 1</div>
<div class="a" style="left:180px;top:672px;width:1px;height:121px;background:#ababab;"></div>
<div class="a" style="left:565px;top:672px;width:1px;height:87px;background:#ababab;"></div>
<div class="a" style="left:1104px;top:672px;width:1px;height:121px;background:#ababab;"></div>
<div class="a" style="left:565px;top:650px;width:1px;height:22px;background:#a08050;"></div>
<div class="a" style="left:167px;top:676px;width:28px;height:49px;background:#f4a9a9;border:1px solid #b8a0a0;box-sizing:border-box;"></div>
<div class="a" style="left:180px;top:676px;width:1px;height:49px;background:#d89898;"></div>
<div class="a" style="left:552px;top:676px;width:28px;height:49px;background:#f4a9a9;border:1px solid #b8a0a0;box-sizing:border-box;"></div>
<div class="a" style="left:565px;top:676px;width:1px;height:49px;background:#d89898;"></div>
<div class="a" style="left:1090px;top:676px;width:28px;height:49px;background:#f4a9a9;border:1px solid #b8a0a0;box-sizing:border-box;"></div>
<div class="a" style="left:1103px;top:676px;width:1px;height:49px;background:#d89898;"></div>
<div class="a" style="left:180px;top:751px;width:171.0px;height:1px;background:#ababab;"></div>
<div class="a" style="left:395.0px;top:751px;width:170.0px;height:1px;background:#ababab;"></div>
<svg class="a" style="left:180px;top:747px;" width="10" height="9" viewBox="0 0 10 9"><path d="M0.500 4.500 L9.500 1 V8 Z" fill="#ababab"/></svg>
<svg class="a" style="left:555px;top:747px;" width="10" height="9" viewBox="0 0 10 9"><path d="M9.500 4.500 L0.500 1 V8 Z" fill="#ababab"/></svg>
<div class="t" style="left:354.00px;top:743px;font-size:10.5px;letter-spacing:0.009px;color:#9a9a9a;">2.000 m</div>
<div class="a" style="left:565px;top:751px;width:248.0px;height:1px;background:#ababab;"></div>
<div class="a" style="left:857.0px;top:751px;width:247.0px;height:1px;background:#ababab;"></div>
<svg class="a" style="left:565px;top:747px;" width="10" height="9" viewBox="0 0 10 9"><path d="M0.500 4.500 L9.500 1 V8 Z" fill="#ababab"/></svg>
<svg class="a" style="left:1094px;top:747px;" width="10" height="9" viewBox="0 0 10 9"><path d="M9.500 4.500 L0.500 1 V8 Z" fill="#ababab"/></svg>
<div class="t" style="left:816.00px;top:743px;font-size:10.5px;letter-spacing:0.009px;color:#9a9a9a;">2.800 m</div>
<div class="a" style="left:180px;top:787px;width:440.0px;height:2px;background:#c4c4c4;"></div>
<div class="a" style="left:664.0px;top:787px;width:440.0px;height:2px;background:#c4c4c4;"></div>
<svg class="a" style="left:180px;top:783px;" width="10" height="9" viewBox="0 0 10 9"><path d="M0.500 4.500 L9.500 1 V8 Z" fill="#ababab"/></svg>
<svg class="a" style="left:1094px;top:783px;" width="10" height="9" viewBox="0 0 10 9"><path d="M9.500 4.500 L0.500 1 V8 Z" fill="#ababab"/></svg>
<div class="t" style="left:623.00px;top:779px;font-size:10.5px;letter-spacing:0.009px;color:#9a9a9a;">4.800 m</div>
<svg class="a" style="left:1130px;top:612px;" width="50" height="50" viewBox="0 0 50 50"><g fill="#fff" stroke="#151515" stroke-width="2.800"><rect x="2" y="2" width="11" height="11" rx="2"/><rect x="13" y="2" width="24" height="11" rx="1"/><rect x="37" y="2" width="11" height="11" rx="2"/><rect x="2" y="13" width="11" height="24" rx="1"/><rect x="13" y="13" width="24" height="24" rx="1"/><rect x="37" y="13" width="11" height="24" rx="1"/><rect x="2" y="37" width="11" height="11" rx="2"/><rect x="13" y="37" width="24" height="11" rx="1"/><rect x="37" y="37" width="11" height="11" rx="2"/></g></svg>
<div class="t" style="left:1150.00px;top:628px;font-size:10px;color:#98d898;font-weight:bold;-webkit-text-stroke:0;">-Y</div>
<div class="a" style="left:1206px;top:602px;width:37px;height:21px;background:#cfe2f6;"></div>
<svg class="a" style="left:1231px;top:610px;" width="9" height="5" viewBox="0 0 9 5"><path d="M0.500 0 H8 L4.200 4.500 Z" fill="#111"/></svg>
<div class="a" style="left:1206px;top:626px;width:37px;height:21px;background:#cfe2f6;"></div>
<svg class="a" style="left:1231px;top:634px;" width="9" height="5" viewBox="0 0 9 5"><path d="M0.500 0 H8 L4.200 4.500 Z" fill="#111"/></svg>
<div class="a" style="left:1206px;top:650px;width:37px;height:21px;background:#cfe2f6;"></div>
<svg class="a" style="left:1231px;top:658px;" width="9" height="5" viewBox="0 0 9 5"><path d="M0.500 0 H8 L4.200 4.500 Z" fill="#111"/></svg>
<div class="a" style="left:1206px;top:674px;width:37px;height:21px;background:#cfe2f6;"></div>
<svg class="a" style="left:1231px;top:682px;" width="9" height="5" viewBox="0 0 9 5"><path d="M0.500 0 H8 L4.200 4.500 Z" fill="#111"/></svg>
<svg class="a" style="left:1208px;top:604px;" width="18" height="17" viewBox="0 0 18 17"><path d="M2 5 L6 2 H15 V11 L11 14.500 H2 Z" fill="#a8b4cc" stroke="#7a88a8" stroke-width="0.800"/><path d="M2 5 H11 V14.500 M11 5 L15 2" fill="none" stroke="#7a88a8" stroke-width="0.800"/></svg>
<svg class="a" style="left:1207px;top:627px;" width="22" height="19" viewBox="0 0 22 19"><path d="M3.500 4 V15" stroke="#1a3ac0" stroke-width="1.300"/><path d="M3.500 18 L1 13.500 H6 Z" fill="#1a3ac0"/><path d="M3.500 4 H13" stroke="#d04a18" stroke-width="1.300"/><path d="M16 4 L11.500 1.500 V6.500 Z" fill="#d04a18"/><circle cx="3.500" cy="4" r="2.300" fill="#18a048"/><text x="8.500" y="15.500" font-size="9" font-weight="bold" font-family="Liberation Sans, sans-serif" fill="#111">-Y</text></svg>
<svg class="a" style="left:1208px;top:652px;" width="18" height="17" viewBox="0 0 18 17"><path d="M2 8 H7 V3 L10 1 H16 V13 L12 15.500 H2 Z" fill="#a8b4cc" stroke="#8090b0" stroke-width="0.800"/><path d="M2 8 L5 6 H7 M7 8 H12 V15.500 M12 8 L16 5.500" fill="none" stroke="#8090b0" stroke-width="0.700"/></svg>
<svg class="a" style="left:1208px;top:677px;" width="18" height="14" viewBox="0 0 18 14"><path d="M1.500 6 V13 M16.500 6 V13 M1.500 9.500 H16.500" fill="none" stroke="#8a96a8" stroke-width="1.100"/><text x="6" y="6.500" font-size="9" font-family="Liberation Sans, sans-serif" fill="#666">x</text></svg>
<div class="a" style="left:1206px;top:790px;width:25px;height:21px;background:#cfe2f6;"></div>
<svg class="a" style="left:1209px;top:792px;" width="20" height="18" viewBox="0 0 20 18"><circle cx="7" cy="7" r="4.800" fill="#fff" stroke="#333" stroke-width="1.600"/><path d="M10.500 10.500 L15 15.500" stroke="#333" stroke-width="2.200"/><path d="M9 2 L17 9 M17 2 L9 9" stroke="#d81818" stroke-width="2.200"/></svg>
<div class="a" style="left:772px;top:17px;width:367px;height:33px;background:#ffffff;border:1px solid #a6a6a6;box-sizing:border-box;"></div>
<div class="a" style="left:773px;top:17px;width:365px;height:16px;background:#0078d7;"></div>
<div class="t" style="left:776.00px;top:17px;font-size:11px;letter-spacing:0.265px;color:#ffffff;">Deformed segment ends</div>
<div class="t" style="left:776.00px;top:33px;font-size:11px;letter-spacing:0.211px;">Undeformed system</div>
<svg class="a" style="left:0px;top:0px;pointer-events:none;" width="1280" height="960" viewBox="0 0 1280 960"><defs><filter id="sh" x="-20%" y="-20%" width="140%" height="140%"><feGaussianBlur stdDeviation="1.6"/></filter></defs><polygon points="763.4,270.5 885.1,56.0 889.9,58.7 890.5,43.0 877.4,51.7 882.1,54.4 761.6,269.5" fill="#000" opacity="0.35" filter="url(#sh)" transform="translate(-1.5,2)"/><polygon points="396.7,399.1 556.3,640.3 551.8,643.3 565.5,651.0 563.7,635.4 559.2,638.4 398.3,397.9" fill="#000" opacity="0.35" filter="url(#sh)" transform="translate(-1.5,2)"/><polygon points="567.0,651.2 630.7,400.0 636.1,401.3 632.5,386.0 622.1,397.8 627.4,399.2 565.0,650.8" fill="#000" opacity="0.35" filter="url(#sh)" transform="translate(-1.5,2)"/><polygon points="763.4,270.5 885.1,56.0 889.9,58.7 890.5,43.0 877.4,51.7 882.1,54.4 761.6,269.5" fill="#e8473f" stroke="#e8473f" stroke-width="0.8" stroke-linejoin="round"/><polygon points="396.7,399.1 556.3,640.3 551.8,643.3 565.5,651.0 563.7,635.4 559.2,638.4 398.3,397.9" fill="#e8473f" stroke="#e8473f" stroke-width="0.8" stroke-linejoin="round"/><polygon points="567.0,651.2 630.7,400.0 636.1,401.3 632.5,386.0 622.1,397.8 627.4,399.2 565.0,650.8" fill="#e8473f" stroke="#e8473f" stroke-width="0.8" stroke-linejoin="round"/></svg>
</body></html>
